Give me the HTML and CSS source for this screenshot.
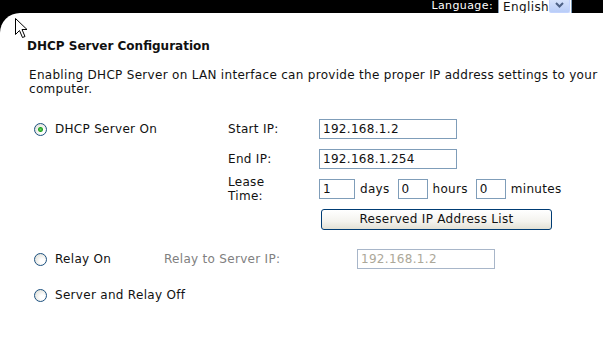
FILE: index.html
```html
<!DOCTYPE html>
<html lang="en">
<head>
    <meta charset="UTF-8">
    <title>DHCP Server Configuration</title>
    <link rel="stylesheet" href="styles.css">
</head>
<body>

    <div class="topbar">
        <span class="lang-label">Language:</span>
        <div class="lang-select">
            <span class="lang-value">English</span>
            <span class="lang-arrow">
                <svg width="9" height="6" viewBox="0 0 9 6"><path d="M1 1 L4.5 4.5 L8 1" fill="none" stroke="#4d6185" stroke-width="2"/></svg>
            </span>
        </div>
    </div>

    <div class="panel">
        <!-- mouse pointer captured in the screenshot -->
        <svg class="pointer" width="13" height="21" viewBox="0 0 13 21">
            <path d="M0.5 0.5 L0.5 16.5 L4.5 12.5 L7.5 19.5 L10 18.5 L7 11.5 L12 11.5 Z" fill="#fff" stroke="#000" stroke-width="1"/>
        </svg>

        <h1>DHCP Server Configuration</h1>
        <p class="intro">Enabling DHCP Server on LAN interface can provide the proper IP address settings to your computer.</p>

        <div class="server-grid">
            <label class="option">
                <input type="radio" name="mode" checked>
                <span>DHCP Server On</span>
            </label>
            <span class="field-label">Start IP:</span>
            <input type="text" class="ip" value="192.168.1.2">

            <span></span>
            <span class="field-label">End IP:</span>
            <input type="text" class="ip" value="192.168.1.254">

            <span></span>
            <span class="field-label lease">Lease<br>Time:</span>
            <div class="lease-row">
                <input type="text" class="small" value="1">
                <span class="unit">days</span>
                <input type="text" class="small" value="0">
                <span class="unit">hours</span>
                <input type="text" class="small" value="0">
                <span class="unit">minutes</span>
            </div>

            <span></span>
            <span></span>
            <button class="reserved">Reserved IP Address List</button>
        </div>

        <div class="relay-row">
            <label class="option relay-option">
                <input type="radio" name="mode">
                <span>Relay On</span>
            </label>
            <span class="relay-label">Relay to Server IP:</span>
            <input type="text" class="ip" value="192.168.1.2" disabled>
        </div>

        <div class="relay-row">
            <label class="option">
                <input type="radio" name="mode">
                <span>Server and Relay Off</span>
            </label>
        </div>
    </div>

</body>
</html>
```

FILE: styles.css
```css
body {
    margin: 0;
    background: #000;
    font-family: "DejaVu Sans", Verdana, sans-serif;
    font-size: 12px;
    letter-spacing: 0.3px;
    color: #111;
}

.topbar {
    height: 13px;
    display: flex;
    justify-content: flex-end;
    align-items: flex-start;
    padding-right: 31px;
    overflow: hidden;
    letter-spacing: 0.4px;
}

.lang-label {
    color: #fff;
    font-size: 11px;
    line-height: 11px;
    margin-right: 5px;
}

.lang-select {
    width: 72px;
    height: 15px;
    margin-top: -3px;
    background: #fff;
    border: 1px solid #7f9db9;
    display: flex;
    align-items: center;
    justify-content: space-between;
}

.lang-value {
    font-size: 12px;
    padding-left: 4px;
    padding-top: 2px;
}

.lang-arrow {
    width: 22px;
    height: 14px;
    margin-right: 1px;
    background: linear-gradient(#dbe6fc, #b9cdf8);
    border: 1px solid #c3d3fd;
    border-top: none;
    border-radius: 0 0 2px 2px;
    display: flex;
    align-items: center;
    justify-content: center;
}

.panel {
    position: relative;
    background: #fff;
    border-top-left-radius: 20px;
    min-height: 328px;
    padding: 25px 0 0 28px;
    box-sizing: border-box;
}

.pointer {
    position: absolute;
    left: 15px;
    top: 5px;
}

h1 {
    font-size: 12px;
    font-weight: bold;
    line-height: 16px;
    letter-spacing: 0;
    margin: 0 0 14px -1px;
}

.intro {
    line-height: 14px;
    margin: 0 0 18px 1px;
}

.server-grid {
    display: grid;
    grid-template-columns: 200px 91px auto;
    grid-auto-rows: 30px;
    align-items: center;
}

.option {
    display: flex;
    align-items: center;
    padding-left: 6px;
}

.option input {
    appearance: none;
    width: 13px;
    height: 13px;
    margin: 0 8px 0 0;
    border: 1px solid #1c5180;
    border-radius: 50%;
    background: radial-gradient(circle at 65% 65%, #fff 20%, #e1e1da 80%);
    box-sizing: border-box;
}

.option input:checked {
    background: radial-gradient(circle, #6bd36b 0, #21a121 2px, transparent 3px),
                radial-gradient(circle at 65% 65%, #fff 20%, #e1e1da 80%);
}

.field-label.lease {
    line-height: 14px;
}

input[type="text"] {
    font-family: "DejaVu Sans", Verdana, sans-serif;
    font-size: 12px;
    letter-spacing: 0.3px;
    height: 20px;
    border: 1px solid #7f9db9;
    padding: 0 3px;
    margin: 0;
    box-sizing: border-box;
    color: #111;
    background: #fff;
    outline: none;
}

.ip {
    width: 138px;
}

.ip:disabled {
    color: #aca899;
    border-color: #a8b6c9;
}

.lease-row {
    display: flex;
    align-items: center;
}

.small {
    width: 36px;
}

.lease-row .small:nth-of-type(2),
.lease-row .small:nth-of-type(3) {
    width: 30px;
}

.unit {
    margin: 0 8px 0 5px;
}

.reserved {
    width: 231px;
    height: 21px;
    margin-left: 2px;
    font-family: "DejaVu Sans", Verdana, sans-serif;
    font-size: 12px;
    letter-spacing: 0.3px;
    color: #111;
    border: 1px solid #003c74;
    border-radius: 3px;
    background: linear-gradient(#fff, #f4f3ee 60%, #e3e1d5);
    padding: 0;
}

.relay-row {
    display: flex;
    align-items: center;
    height: 36px;
}

.server-grid + .relay-row {
    margin-top: 7px;
}

.relay-option {
    width: 130px;
}

.relay-label {
    color: #808080;
    width: 193px;
}
```
